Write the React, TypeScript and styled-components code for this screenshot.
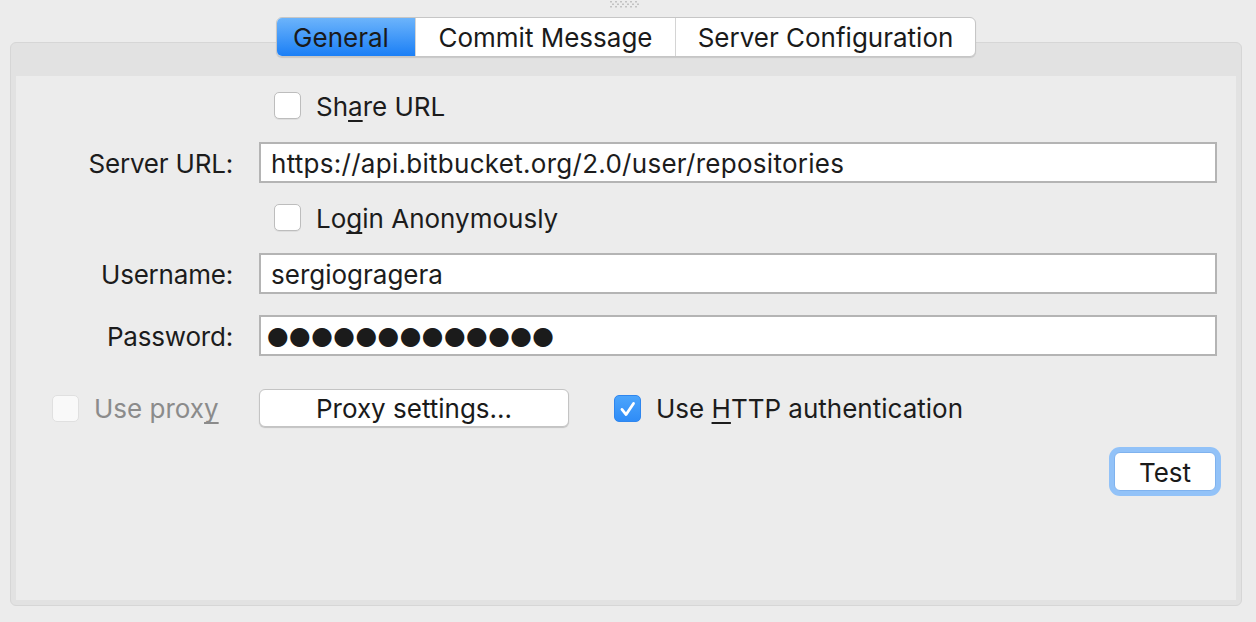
import React from "react";
import styled, { createGlobalStyle, css } from "styled-components";

const GlobalStyle = createGlobalStyle`
  html, body {
    margin: 0;
    padding: 0;
    background: #ececec;
  }
  body {
    font-family: Inter, "Noto Sans", "Liberation Sans", sans-serif;
    color: #1c1c1c;
    -webkit-font-smoothing: antialiased;
  }
`;

const Window = styled.div`
  width: 1256px;
  height: 622px;
  box-sizing: border-box;
  padding: 0 14px 16px 10px;
  display: flex;
  flex-direction: column;
  background: #ececec;
  overflow: hidden;
`;

const Grip = styled.div`
  height: 17px;
  display: flex;
  justify-content: center;
  align-items: flex-start;
  padding-top: 1px;
  box-sizing: border-box;
`;

const TabBar = styled.div`
  display: flex;
  justify-content: center;
  margin-bottom: -15px;
  position: relative;
  z-index: 1;
`;

const Segmented = styled.div`
  display: flex;
  height: 40px;
  box-sizing: border-box;
  border: 1px solid #c6c6c6;
  border-radius: 6px;
  background: #ffffff;
  overflow: hidden;
  box-shadow: 0 1px 1px rgba(0, 0, 0, 0.12);
`;

const Tab = styled.div<{ $w: number; $active?: boolean; $first?: boolean }>`
  width: ${(p) => p.$w}px;
  box-sizing: border-box;
  display: flex;
  align-items: center;
  justify-content: center;
  font-size: 26px;
  line-height: 1;
  padding-top: 2px;
  color: #1a1a1a;
  ${(p) =>
    !p.$first &&
    css`
      border-left: 1px solid #d4d4d4;
    `}
  ${(p) =>
    p.$active &&
    css`
      background: linear-gradient(#6cb4fb, #1b7ff6);
      border-left: none;
      padding-right: 10px;
    `}
`;

const Panel = styled.div`
  flex: 1;
  display: flex;
  flex-direction: column;
  border: 1px solid #d6d6d6;
  border-radius: 6px;
  background: #e2e2e2;
  padding: 33px 5px 5px;
`;

const Content = styled.div`
  flex: 1;
  background: #ececec;
  padding: 16px 19px 0 0;
  display: flex;
  flex-direction: column;
`;

const Row = styled.div<{ $top: number; $h: number }>`
  display: grid;
  grid-template-columns: 217px 958px;
  column-gap: 26px;
  align-items: center;
  height: ${(p) => p.$h}px;
  margin-top: ${(p) => p.$top}px;
`;

const Label = styled.div`
  font-size: 26px;
  line-height: 1;
  padding-top: 2px;
  text-align: right;
  white-space: nowrap;
  letter-spacing: -0.2px;
`;

const Field = styled.div<{ $track?: number }>`
  height: 41px;
  box-sizing: border-box;
  border: 2px solid #b4b4b4;
  background: #ffffff;
  display: flex;
  align-items: center;
  padding: 2px 10px 0;
  font-size: 26px;
  line-height: 1;
  white-space: nowrap;
  letter-spacing: ${(p) => p.$track ?? 0}px;
`;

const Dots = styled.span`
  font-family: "DejaVu Sans", sans-serif;
  font-size: 25px;
  letter-spacing: 0.3px;
  color: #1b1b1b;
  margin-left: -4px;
  margin-top: -2px;
`;

const CheckLine = styled.label<{ $indent: number; $disabled?: boolean }>`
  display: flex;
  align-items: center;
  gap: 15px;
  height: 27px;
  line-height: 1;
  padding-left: ${(p) => p.$indent}px;
  font-size: 26px;
  white-space: nowrap;
  color: ${(p) => (p.$disabled ? "#8b8b8b" : "#1c1c1c")};
`;

const CheckText = styled.span`
  padding-top: 2px;
`;

const Box = styled.span<{ $checked?: boolean; $disabled?: boolean }>`
  width: 27px;
  height: 27px;
  box-sizing: border-box;
  border-radius: 5px;
  flex: none;
  display: flex;
  align-items: center;
  justify-content: center;
  ${(p) =>
    p.$checked
      ? css`
          background: linear-gradient(#4ca5fc, #2f8cf7);
          border: 1px solid #2f86ee;
        `
      : p.$disabled
      ? css`
          background: #f9f9f9;
          border: 1px solid #e0e0e0;
        `
      : css`
          background: #ffffff;
          border: 1px solid #bdbdbd;
          box-shadow: 0 1px 0 rgba(0, 0, 0, 0.06);
        `}
`;

const Mn = styled.span`
  text-decoration: underline;
  text-underline-offset: 4px;
  text-decoration-thickness: 2px;
  text-decoration-skip-ink: none;
`;

const ProxyControls = styled.div`
  display: flex;
  align-items: center;
  gap: 45px;
`;

const PushButton = styled.button<{ $w: number; $h: number; $focus?: boolean }>`
  width: ${(p) => p.$w}px;
  height: ${(p) => p.$h}px;
  box-sizing: border-box;
  border: 1px solid #c4c4c4;
  border-radius: 6px;
  background: #ffffff;
  font-family: inherit;
  font-size: 26px;
  line-height: 1;
  color: #1a1a1a;
  padding: 2px 0 0;
  box-shadow: 0 1px 1px rgba(0, 0, 0, 0.18);
  ${(p) =>
    p.$focus &&
    css`
      border-color: #7fb2ee;
      box-shadow: 0 0 0 5px #92c2f8;
    `}
`;

const TestRow = styled.div`
  display: flex;
  justify-content: flex-end;
  margin-top: 25px;
  padding-right: 1px;
`;

function Check({ checked, disabled }: { checked?: boolean; disabled?: boolean }) {
  return (
    <Box $checked={checked} $disabled={disabled}>
      {checked && (
        <svg width="27" height="27" viewBox="0 0 27 27">
          <path
            d="M7.5 14.5 L12 20 L20 8"
            fill="none"
            stroke="#ffffff"
            strokeWidth="3"
            strokeLinecap="round"
            strokeLinejoin="round"
          />
        </svg>
      )}
    </Box>
  );
}

function GripDots() {
  const dots = [] as React.ReactNode[];
  for (let r = 0; r < 3; r++) {
    for (let c = 0; c < 6; c++) {
      dots.push(<rect key={`${r}-${c}`} x={c * 5 + (r % 2) * 2} y={r * 2.5} width="2" height="1.5" fill="#c2c2c2" />);
    }
  }
  return (
    <svg width="32" height="8" viewBox="0 0 32 8">
      {dots}
    </svg>
  );
}

export default function App() {
  return (
    <>
      <GlobalStyle />
      <Window>
        <Grip>
          <GripDots />
        </Grip>
        <TabBar>
          <Segmented>
            <Tab $w={138} $active $first>
              General
            </Tab>
            <Tab $w={260}>Commit Message</Tab>
            <Tab $w={300}>Server Configuration</Tab>
          </Segmented>
        </TabBar>
        <Panel>
          <Content>
            <Row $top={0} $h={27}>
              <span />
              <CheckLine $indent={15}>
                <Check />
                <CheckText>
                  Sh<Mn>a</Mn>re URL
                </CheckText>
              </CheckLine>
            </Row>
            <Row $top={23} $h={41}>
              <Label>Server URL:</Label>
              <Field $track={0.28}>https://api.bitbucket.org/2.0/user/repositories</Field>
            </Row>
            <Row $top={21} $h={27}>
              <span />
              <CheckLine $indent={15}>
                <Check />
                <CheckText>
                  Lo<Mn>g</Mn>in Anonymously
                </CheckText>
              </CheckLine>
            </Row>
            <Row $top={22} $h={41}>
              <Label>Username:</Label>
              <Field>sergiogragera</Field>
            </Row>
            <Row $top={21} $h={41}>
              <Label>Password:</Label>
              <Field>
                <Dots>●●●●●●●●●●●●●</Dots>
              </Field>
            </Row>
            <Row $top={33} $h={38}>
              <CheckLine $indent={36} $disabled>
                <Check disabled />
                <CheckText>
                  Use prox<Mn>y</Mn>
                </CheckText>
              </CheckLine>
              <ProxyControls>
                <PushButton $w={310} $h={38}>
                  Proxy settings...
                </PushButton>
                <CheckLine $indent={0}>
                  <Check checked />
                  <CheckText>
                    Use <Mn>H</Mn>TTP authentication
                  </CheckText>
                </CheckLine>
              </ProxyControls>
            </Row>
            <TestRow>
              <PushButton $w={102} $h={39} $focus>
                Test
              </PushButton>
            </TestRow>
          </Content>
        </Panel>
      </Window>
    </>
  );
}
